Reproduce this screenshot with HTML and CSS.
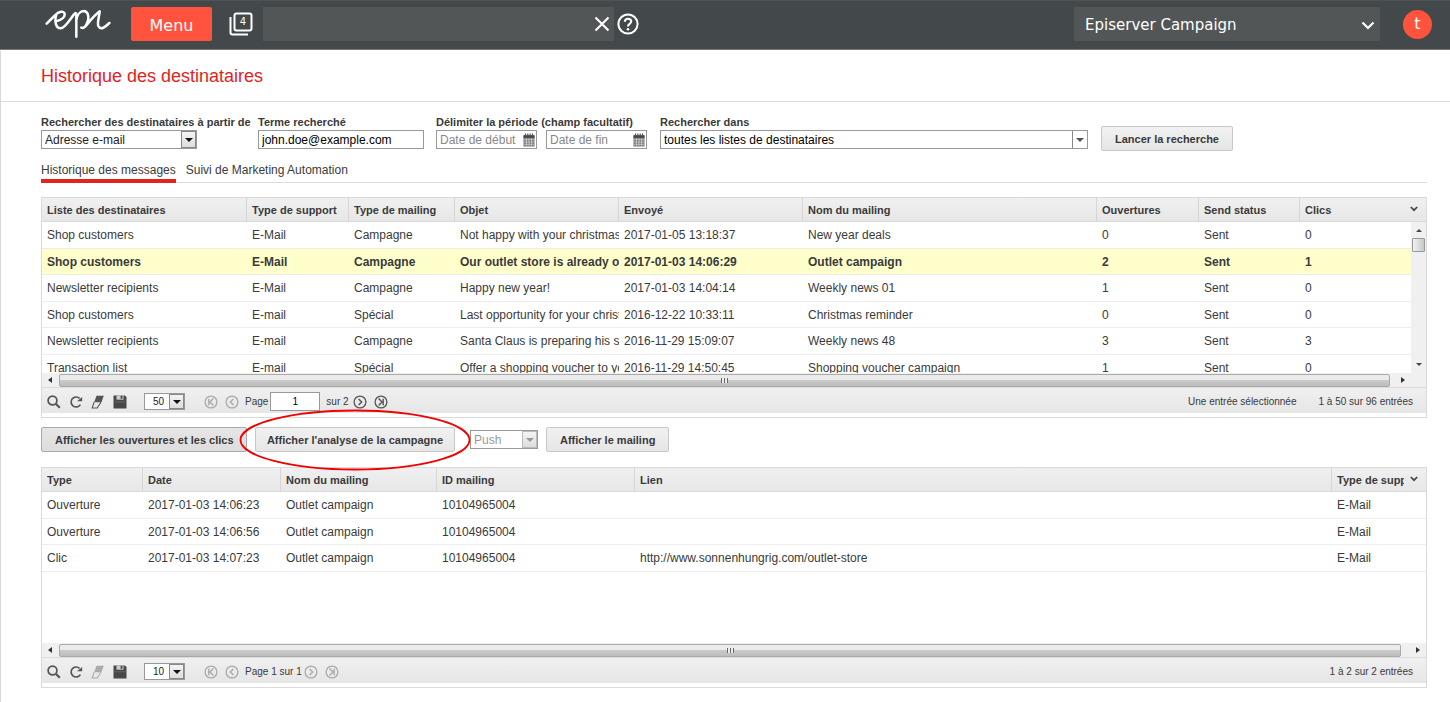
FILE: index.html
```html
<!DOCTYPE html>
<html lang="fr">
<head>
<meta charset="utf-8">
<title>Historique des destinataires</title>
<link rel="stylesheet" href="styles.css">
</head>
<body>
<svg class="sprite" aria-hidden="true">
  <symbol id="i-search" viewBox="0 0 14 14"><circle cx="5.5" cy="5.5" r="4.4" fill="none" stroke="#555" stroke-width="1.7"/><path d="M8.8 8.8l4 4" stroke="#555" stroke-width="2.2"/></symbol>
  <symbol id="i-reload" viewBox="0 0 14 14"><path d="M10.6 3.4A5 5 0 1 0 11.4 9.6" fill="none" stroke="#555" stroke-width="1.7"/><path d="M8 6.200h5.200V2z" fill="#555"/></symbol>
  <symbol id="i-eraser" viewBox="0 0 14 14"><path d="M5.5.8h6.7L9.8 7.2H3.1z" fill="currentColor"/><path d="M3.1 7.2L1.2 13h5L9.8 7.2 12.2.8" fill="none" stroke="currentColor" stroke-width="1.1"/></symbol>
  <symbol id="i-save" viewBox="0 0 14 14"><path d="M.5.5h11.3L13.5 2v11.5H.5z" fill="#484848"/><path d="M3.5.5h7v4.2h-7z" fill="#ccc"/><path d="M7.6.8h1.8v3H7.6z" fill="#484848"/><path d="M.5 6.8h13" stroke="#777" stroke-width=".6"/></symbol>
  <symbol id="i-first" viewBox="0 0 14 14"><circle cx="7" cy="7" r="5.9" fill="none" stroke="currentColor" stroke-width="1.3"/><path d="M4.8 3.8v6.4M9.4 3.6L6 7l3.4 3.4" fill="none" stroke="currentColor" stroke-width="1.4"/></symbol>
  <symbol id="i-prev" viewBox="0 0 14 14"><circle cx="7" cy="7" r="5.9" fill="none" stroke="currentColor" stroke-width="1.3"/><path d="M8.4 3.9L5.3 7l3.1 3.1" fill="none" stroke="currentColor" stroke-width="1.4"/></symbol>
  <symbol id="i-next" viewBox="0 0 14 14"><circle cx="7" cy="7" r="5.9" fill="none" stroke="currentColor" stroke-width="1.3"/><path d="M5.6 3.9L8.7 7l-3.1 3.1" fill="none" stroke="currentColor" stroke-width="1.4"/></symbol>
  <symbol id="i-last" viewBox="0 0 14 14"><circle cx="7" cy="7" r="5.9" fill="none" stroke="currentColor" stroke-width="1.3"/><path d="M9.2 3.8v6.4M4.6 3.6L8 7l-3.4 3.4" fill="none" stroke="currentColor" stroke-width="1.4"/></symbol>
  <symbol id="i-cal" viewBox="0 0 12 14"><path d="M.5 2.5h11v11H.5z" fill="#777"/><path d="M.5 2.2h11v2.6H.5z" fill="#444"/><path d="M2.5.5v3M4.8.5v3M7.2.5v3M9.5.5v3" stroke="#555" stroke-width="1.2"/><path d="M1 6.7h10M1 9h10M1 11.3h10M3.4 5v8M6 5v8M8.6 5v8" stroke="#d8d8d8" stroke-width=".7"/></symbol>
  <symbol id="i-chev" viewBox="0 0 8 6"><path d="M.8 1L4 4.2 7.2 1" fill="none" stroke="#444" stroke-width="1.7"/></symbol>
</svg>

<header class="topbar">
  <svg class="logo" viewBox="15 20 198 90" role="img" aria-label="epi"><path d="M20 64L46 38C55 28 72 23 74 35C75 46 58 54 48 57M49 36C43 56 47 78 62 78C75 78 92 48 102 36C106 31 109 30 109 38V103M109 54C111 38 120 26 132 26C147 28 147 48 142 60C137 73 130 79 124 76M136 72C150 56 164 38 179 27C178 42 171 60 175 71C182 85 196 74 208 62" fill="none" stroke="#fff" stroke-width="7.500" stroke-linecap="round" stroke-linejoin="round"/></svg>
  <button class="menu-btn" type="button">Menu</button>
  <button class="tabs-btn" type="button" aria-label="4 onglets">
    <svg width="24" height="24" viewBox="0 0 24 24" aria-hidden="true"><rect x="5.5" y="1.5" width="17" height="17" rx="2" fill="none" stroke="#fff" stroke-width="2"/><path d="M1.5 5v15.5a2 2 0 0 0 2 2H19" fill="none" stroke="#fff" stroke-width="2"/></svg>
    <span class="tabs-count">4</span>
  </button>
  <div class="global-search">
    <input type="text" aria-label="Recherche">
    <button type="button" aria-label="Effacer"><svg width="16" height="16" viewBox="0 0 16 16"><path d="M1.5 1.5l13 13M14.5 1.5l-13 13" stroke="#fff" stroke-width="2.1"/></svg></button>
  </div>
  <button class="help-btn" type="button" aria-label="Aide"><svg width="22" height="22" viewBox="0 0 22 22"><circle cx="11" cy="11" r="9.6" fill="none" stroke="#fff" stroke-width="2"/><path d="M7.8 8.8C7.8 4.6 14.2 4.8 14.2 8.6C14.2 10.9 11 10.9 11 13.4" fill="none" stroke="#fff" stroke-width="2.1"/><circle cx="11" cy="16.2" r="1.3" fill="#fff"/></svg></button>
  <div class="product">
    <select aria-label="Produit"><option>Episerver Campaign</option></select>
    <svg width="14" height="9" viewBox="0 0 14 9" aria-hidden="true"><path d="M1.5 1.5L7 7l5.500-5.500" fill="none" stroke="#fff" stroke-width="2.2"/></svg>
  </div>
  <button class="avatar" type="button">t</button>
</header>

<main class="page">
  <h1>Historique des destinataires</h1>
  <div class="content">
    <form class="search">
      <div class="field field-type">
        <label for="type">Rechercher des destinataires à partir de</label>
        <span class="combo type-combo"><select id="type"><option>Adresse e-mail</option></select><span class="arrow"></span></span>
      </div>
      <div class="field field-term">
        <label for="term">Terme recherché</label>
        <input class="box" id="term" type="text" value="john.doe@example.com">
      </div>
      <div class="field">
        <label for="from">Délimiter la période (champ facultatif)</label>
        <div class="dates">
          <span class="date"><input class="box" id="from" type="text" placeholder="Date de début"><svg><use href="#i-cal"/></svg></span>
          <span class="date"><input class="box" type="text" placeholder="Date de fin" aria-label="Date de fin"><svg><use href="#i-cal"/></svg></span>
        </div>
      </div>
      <div class="field field-lists">
        <label for="lists">Rechercher dans</label>
        <span class="combo flat"><select id="lists"><option>toutes les listes de destinataires</option></select><span class="arrow"></span></span>
      </div>
      <button class="btn btn-search" type="button">Lancer la recherche</button>
    </form>

    <nav class="tabs">
      <a class="active" href="#messages">Historique des messages</a>
      <a href="#automation">Suivi de Marketing Automation</a>
    </nav>

    <section class="panel" id="messages">
      <div class="grid-wrap">
        <table class="grid">
          <colgroup><col class="w205"><col class="w102"><col class="w106"><col class="w164"><col class="w184"><col><col class="w102"><col class="w101"><col class="w126"></colgroup>
          <thead><tr><th>Liste des destinataires</th><th>Type de support</th><th>Type de mailing</th><th>Objet</th><th>Envoyé</th><th>Nom du mailing</th><th>Ouvertures</th><th>Send status</th><th>Clics</th></tr></thead>
          <tbody>
            <tr><td>Shop customers</td><td>E-Mail</td><td>Campagne</td><td>Not happy with your christmas</td><td>2017-01-05 13:18:37</td><td>New year deals</td><td>0</td><td>Sent</td><td>0</td></tr>
            <tr class="selected"><td>Shop customers</td><td>E-Mail</td><td>Campagne</td><td>Our outlet store is already o</td><td>2017-01-03 14:06:29</td><td>Outlet campaign</td><td>2</td><td>Sent</td><td>1</td></tr>
            <tr><td>Newsletter recipients</td><td>E-Mail</td><td>Campagne</td><td>Happy new year!</td><td>2017-01-03 14:04:14</td><td>Weekly news 01</td><td>1</td><td>Sent</td><td>0</td></tr>
            <tr><td>Shop customers</td><td>E-mail</td><td>Spécial</td><td>Last opportunity for your christ</td><td>2016-12-22 10:33:11</td><td>Christmas reminder</td><td>0</td><td>Sent</td><td>0</td></tr>
            <tr><td>Newsletter recipients</td><td>E-mail</td><td>Campagne</td><td>Santa Claus is preparing his s</td><td>2016-11-29 15:09:07</td><td>Weekly news 48</td><td>3</td><td>Sent</td><td>3</td></tr>
            <tr><td>Transaction list</td><td>E-mail</td><td>Spécial</td><td>Offer a shopping voucher to yo</td><td>2016-11-29 14:50:45</td><td>Shopping voucher campaign</td><td>1</td><td>Sent</td><td>0</td></tr>
          </tbody>
        </table>
        <button class="cols-btn" type="button" aria-label="Colonnes"><svg><use href="#i-chev"/></svg></button>
        <div class="vscroll"><i class="tri up"></i><i class="vthumb"></i><i class="tri down"></i></div>
      </div>
      <div class="hscroll with-corner"><i class="tri left"></i><div class="hthumb"></div><i class="tri right"></i></div>
      <div class="toolbar">
        <button type="button" aria-label="Rechercher"><svg><use href="#i-search"/></svg></button>
        <button type="button" aria-label="Actualiser"><svg><use href="#i-reload"/></svg></button>
        <button type="button" aria-label="Effacer"><svg><use href="#i-eraser"/></svg></button>
        <button type="button" aria-label="Enregistrer"><svg><use href="#i-save"/></svg></button>
        <span class="combo size-combo"><select aria-label="Entrées par page"><option>50</option></select><span class="arrow"></span></span>
        <button class="off" type="button" aria-label="Première page"><svg><use href="#i-first"/></svg></button>
        <button class="off" type="button" aria-label="Page précédente"><svg><use href="#i-prev"/></svg></button>
        <label class="page-label" for="page">Page</label>
        <input class="box page-no" id="page" type="text" value="1">
        <span class="page-total">sur 2</span>
        <button type="button" aria-label="Page suivante"><svg><use href="#i-next"/></svg></button>
        <button type="button" aria-label="Dernière page"><svg><use href="#i-last"/></svg></button>
        <span class="status"><span>Une entrée sélectionnée</span><span>1 à 50 sur 96 entrées</span></span>
      </div>
    </section>

    <div class="actions">
      <button class="btn pressed" type="button">Afficher les ouvertures et les clics</button>
      <span class="marked">
        <button class="btn btn-analysis" type="button">Afficher l'analyse de la campagne</button>
        <svg class="marker" width="232" height="62" viewBox="0 0 232 62" aria-hidden="true"><ellipse cx="116" cy="31" rx="114.500" ry="29.500" fill="none" stroke="#f00000" stroke-width="1.800"/></svg>
      </span>
      <span class="combo push-combo"><select disabled aria-label="Canal"><option>Push</option></select><span class="arrow"></span></span>
      <button class="btn" type="button">Afficher le mailing</button>
    </div>

    <section class="panel">
      <div class="grid-wrap">
        <table class="grid">
          <colgroup><col class="w101"><col class="w138"><col class="w156"><col class="w198"><col><col class="w94"></colgroup>
          <thead><tr><th>Type</th><th>Date</th><th>Nom du mailing</th><th>ID mailing</th><th>Lien</th><th><span class="cut">Type de support</span></th></tr></thead>
          <tbody>
            <tr><td>Ouverture</td><td>2017-01-03 14:06:23</td><td>Outlet campaign</td><td>10104965004</td><td></td><td>E-Mail</td></tr>
            <tr><td>Ouverture</td><td>2017-01-03 14:06:56</td><td>Outlet campaign</td><td>10104965004</td><td></td><td>E-Mail</td></tr>
            <tr><td>Clic</td><td>2017-01-03 14:07:23</td><td>Outlet campaign</td><td>10104965004</td><td>http://www.sonnenhungrig.com/outlet-store</td><td>E-Mail</td></tr>
          </tbody>
        </table>
        <button class="cols-btn" type="button" aria-label="Colonnes"><svg><use href="#i-chev"/></svg></button>
      </div>
      <div class="hscroll"><i class="tri left"></i><div class="hthumb"></div><i class="tri right"></i></div>
      <div class="toolbar">
        <button type="button" aria-label="Rechercher"><svg><use href="#i-search"/></svg></button>
        <button type="button" aria-label="Actualiser"><svg><use href="#i-reload"/></svg></button>
        <button class="off" type="button" aria-label="Effacer"><svg><use href="#i-eraser"/></svg></button>
        <button type="button" aria-label="Enregistrer"><svg><use href="#i-save"/></svg></button>
        <span class="combo size-combo"><select aria-label="Entrées par page"><option>10</option></select><span class="arrow"></span></span>
        <button class="off" type="button" aria-label="Première page"><svg><use href="#i-first"/></svg></button>
        <button class="off" type="button" aria-label="Page précédente"><svg><use href="#i-prev"/></svg></button>
        <span class="page-label">Page 1 sur 1</span>
        <button class="off" type="button" aria-label="Page suivante"><svg><use href="#i-next"/></svg></button>
        <button class="off" type="button" aria-label="Dernière page"><svg><use href="#i-last"/></svg></button>
        <span class="status"><span>1 à 2 sur 2 entrées</span></span>
      </div>
    </section>
  </div>
</main>
</body>
</html>
```

FILE: styles.css
```css
* { box-sizing: border-box; }
body {
  margin: 0;
  background: #fff;
  color: #3a3a3a;
  font: 12px/16px "Liberation Sans", Arial, sans-serif;
}
button, input, select { font: inherit; color: inherit; margin: 0; }
button { padding: 0; border: 0; background: none; }
svg { display: block; }
.sprite { position: absolute; width: 0; height: 0; }

/* Top bar */
.topbar {
  display: flex;
  align-items: center;
  height: 50px;
  padding: 0 18px 2px 45px;
  background: #43484a;
  border-top: 1px solid #4e5355;
  border-bottom: 1px solid #75797b;
  color: #fff;
  font-family: "DejaVu Sans", Verdana, sans-serif;
  font-size: 15px;
}
.logo { width: 66px; height: 30px; }
.menu-btn { width: 81px; height: 34px; margin-left: 20px; padding-top: 3px; background: #ff533d; border-radius: 2px; }
.tabs-btn { display: grid; margin-left: 17px; }
.tabs-btn > * { grid-area: 1 / 1; }
.tabs-count { padding-left: 4px; font-size: 10px; line-height: 20px; }
.global-search { display: flex; align-items: center; width: 351px; height: 34px; margin-left: 10px; padding-right: 4px; background: #525656; }
.global-search input { flex: 1; min-width: 0; height: 34px; border: 0; background: none; }
.help-btn { margin-left: 3px; }
.product { position: relative; width: 306px; margin-left: auto; }
.product select { display: block; width: 100%; height: 34px; padding: 2px 11px 0; appearance: none; border: 0; border-radius: 0; background: #525656; }
.product svg { position: absolute; right: 5px; top: 14px; pointer-events: none; }
.avatar { width: 29px; height: 29px; margin-left: 23px; border-radius: 50%; background: #ff533d; font-size: 16px; }
.menu-btn { font-size: 16px; }

/* Page frame */
.page { min-height: calc(100vh - 51px); margin-top: 1px; border-left: 1px solid #d8d8d8; }
h1 {
  margin: 0;
  height: 51px;
  padding-left: 40px;
  border-bottom: 1px solid #dcdcdc;
  color: #e2231f;
  font-size: 18px;
  font-weight: normal;
  line-height: 50px;
}
.content { padding: 12px 23px 0 40px; }

/* Form */
.search { display: flex; align-items: flex-start; gap: 12px; }
.field { display: flex; flex-direction: column; }
.field label { font-size: 11px; font-weight: bold; line-height: 16px; white-space: nowrap; }
.field-type { width: 205px; }
.field-term { width: 166px; }
.field-lists { width: 428px; margin-left: 1px; }
.box { width: 100%; height: 19px; padding: 0 3px; border: 1px solid #999; border-radius: 0; background: #fff; color: #000; }
.box::placeholder { color: #888; opacity: 1; }
.dates { display: flex; gap: 9px; }
.date { position: relative; width: 101px; }
.date .box { padding-right: 18px; }
.date svg { position: absolute; right: 2px; top: 3px; width: 12px; height: 14px; }

.combo { position: relative; display: block; height: 19px; }
.combo select { display: block; width: 100%; height: 100%; padding: 0 3px; appearance: none; border: 1px solid #999; border-radius: 0; background: #fff; color: #222; opacity: 1; }
.arrow { position: absolute; top: 1px; right: 1px; bottom: 1px; width: 15px; border: 1px solid #888; background: linear-gradient(#f4f4f4, #ddd); pointer-events: none; }
.arrow::after { content: ""; position: absolute; left: 3px; top: 6px; border: solid transparent; border-width: 4px 4px 0; border-top-color: #111; }
.type-combo { width: 156px; }
.flat select { color: #000; }
.flat .arrow { background: #fff; border-width: 0 0 0 1px; }
.flat .arrow::after { top: 7px; border-width: 4px 4px 0; border-top-color: #555; }

.btn {
  height: 25px;
  padding: 0 13px;
  border: 1px solid #c8c8c8;
  border-radius: 2px;
  background: linear-gradient(#f1f1f1, #e6e6e6);
  font-size: 11px;
  font-weight: bold;
  white-space: nowrap;
}
.btn-search { width: 132px; margin: 12px 0 0 1px; padding: 0; }

/* Tabs */
.tabs { display: flex; gap: 10px; margin-top: 11px; border-bottom: 1px solid #ddd; }
.tabs a { height: 20px; color: #3a3a3a; text-decoration: none; }
.tabs .active { height: 21px; margin-bottom: -1px; border-bottom: 4px solid #e2231f; }

/* Panels */
.panel { margin-top: 14px; padding-bottom: 4px; border: 1px solid #dadada; }
.grid-wrap { position: relative; height: 175px; overflow: hidden; }
.grid { width: 100%; table-layout: fixed; border-collapse: separate; border-spacing: 0; }
.w94 { width: 94px; }
.w101 { width: 101px; }
.w102 { width: 102px; }
.w106 { width: 106px; }
.w126 { width: 126px; }
.w138 { width: 138px; }
.w156 { width: 156px; }
.w164 { width: 164px; }
.w184 { width: 184px; }
.w198 { width: 198px; }
.w205 { width: 205px; }
.grid th, .grid td { padding: 0 0 0 5px; overflow: hidden; text-align: left; white-space: nowrap; }
.grid th { height: 24px; border-right: 1px solid #d6d6d6; border-bottom: 1px solid #dadada; background: linear-gradient(#f0f0f0, #e7e7e7); font-size: 11px; }
.grid th:last-child { border-right: 0; }
.cut { display: block; margin-right: 22px; overflow: hidden; }
.grid td { height: 27px; border-bottom: 1px solid #ededed; }
.grid tr:nth-child(even) td { height: 26px; }
.grid .selected td { background: #ffffcc; font-weight: bold; }
.cols-btn { position: absolute; top: 8px; right: 8px; }
.cols-btn svg { width: 8px; height: 6px; }

/* Scroll bars */
.vscroll { position: absolute; top: 24px; right: 0; bottom: 0; display: flex; flex-direction: column; align-items: center; width: 15px; padding: 7px 0 7px; background: #f0f0f0; }
.vthumb { width: 13px; height: 14px; margin-top: 6px; border: 1px solid #999; border-radius: 1px; background: linear-gradient(90deg, #f2f2f2, #c8c8c8); }
.tri { border: 3px solid transparent; }
.tri.up { border-top: 0; border-bottom-color: #444; }
.tri.down { border-bottom: 0; border-top-color: #444; margin-top: auto; }
.tri.left { border-left: 0; border-right-color: #333; border-right-width: 4px; }
.tri.right { border-right: 0; border-left-color: #333; border-left-width: 4px; }
.hscroll { display: flex; align-items: center; gap: 7px; height: 14px; padding: 0 6px; background: #f0f0f0; }
.hthumb { display: flex; flex: 1; justify-content: center; align-items: center; height: 13px; margin-right: 8px; border: 1px solid #aaa; border-radius: 2px; background: linear-gradient(#ebebeb 45%, #cacaca 50%, #bdbdbd); }
.hthumb::after { content: ""; width: 7px; height: 5px; background: repeating-linear-gradient(90deg, #666 0 1px, #eee 1px 3px); }
.with-corner { padding-right: 21px; }
.with-corner .hthumb { margin-right: 4px; }

/* Toolbars */
.toolbar { display: flex; align-items: center; height: 26px; padding: 2px 13px 0 5px; border-top: 1px solid #dcdcdc; background: linear-gradient(#f0f0f0, #e6e6e6); font-size: 10px; }
.toolbar button { margin-right: 8px; color: #555; }
.toolbar button svg { width: 14px; height: 14px; }
.toolbar .off { color: #aaa; }
.size-combo { width: 41px; height: 17px; margin: 0 19px 0 9px; }
.size-combo ~ button { margin-right: 7px; }
.size-combo select { padding-left: 8px; }
.size-combo .arrow::after { top: 5px; }
.page-label { margin: 0 2px 0 -1px; }
.page-no { width: 50px; height: 19px; margin-right: 6px; text-align: center; }
.page-total { margin-right: 4px; }
.status { display: flex; gap: 22px; margin-left: auto; }

/* Actions */
.actions { display: flex; align-items: center; gap: 8px; margin: 9px 0 15px; }
.pressed { width: 206px; border-color: #aaa; background: linear-gradient(#e6e6e6, #ddd); }
.marked { position: relative; width: 200px; }
.btn-analysis { width: 100%; padding: 0; }
.marker { position: absolute; left: -16px; top: -18px; z-index: 1; pointer-events: none; }
.push-combo { width: 68px; margin-left: 7px; }
.push-combo select { color: #999; }
.push-combo .arrow { border-color: #bbb; }
.push-combo .arrow::after { border-top-color: #999; }
```
